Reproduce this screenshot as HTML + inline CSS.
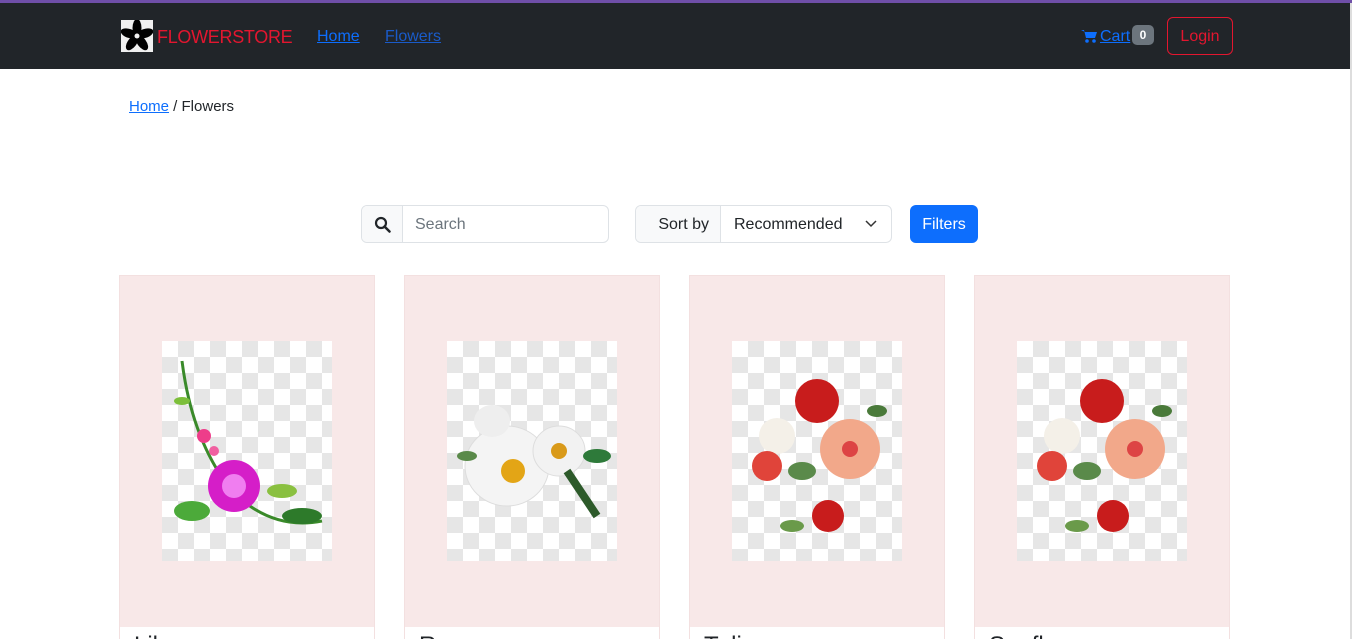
<!DOCTYPE html>
<html><head><style>
*{box-sizing:border-box;margin:0;padding:0}
html,body{width:1352px;height:639px;overflow:hidden}
body{background:#fff;font-family:"Liberation Sans",sans-serif;position:relative}
.top{position:absolute;left:0;top:0;width:1352px;height:3px;background:#6f4fa8}
.nav{position:absolute;left:0;top:3px;width:1350px;height:66px;background:#212529}
.logo{position:absolute;left:121px;top:20px;width:32px;height:32px;background:#f0f0f0}
.brand{position:absolute;left:157px;top:27px;color:#e3162f;font-size:18px;letter-spacing:-0.3px}
.nl{position:absolute;top:28px;font-size:16px;color:#0d6efd;text-decoration:underline}
.badge{position:absolute;left:1132px;top:25px;width:22px;height:20px;background:#6c757d;border-radius:5px;color:#fff;font-size:12px;font-weight:bold;text-align:center;line-height:20px}
.login{position:absolute;left:1167px;top:17px;width:66px;height:38px;border:1px solid #e3162f;border-radius:6px;color:#e3162f;font-size:16px;text-align:center;line-height:38px}
.sb{position:absolute;right:0;top:3px;width:2px;height:636px;background:#ddd}
.grp{position:absolute;top:205px;height:38px;border:1px solid #dee2e6;border-radius:6px;overflow:hidden;font-size:16px;color:#212529}
.grp div{position:absolute;top:0;height:36px;line-height:38px}
.card{position:absolute;top:275px;width:256px;height:364px;border:1px solid #f3e0e0;border-bottom:none;overflow:hidden}
.pink{position:absolute;left:0;top:0;width:254px;height:351px;background:#f8e8e8}
.img{position:absolute;left:42px;top:65px;width:170px;height:220px;background-color:#fff;background-image:linear-gradient(45deg,#e6e6e6 25%,transparent 25%,transparent 75%,#e6e6e6 75%),linear-gradient(45deg,#e6e6e6 25%,transparent 25%,transparent 75%,#e6e6e6 75%);background-size:32px 32px;background-position:0 0,16px 16px}
.t{position:absolute;left:14px;top:356px;font-size:24px;color:#212529}
</style></head><body>
<div class="top"></div>
<div class="nav"></div>
<div class="logo"><svg width="32" height="32" viewBox="0 0 32 32"><g fill="#000" transform="translate(16 16)"><ellipse rx="4.5" ry="9" cy="-8"/><ellipse rx="4.5" ry="9" cy="-8" transform="rotate(72)"/><ellipse rx="4.5" ry="9" cy="-8" transform="rotate(144)"/><ellipse rx="4.5" ry="9" cy="-8" transform="rotate(216)"/><ellipse rx="4.5" ry="9" cy="-8" transform="rotate(288)"/><circle r="2.5" fill="#f0f0f0"/></g></svg></div>
<div class="brand">FLOWERSTORE</div>
<div class="nl" style="left:317px">Home</div>
<div class="nl" style="left:385px;color:#1a5bc8">Flowers</div>
<svg style="position:absolute;left:1081px;top:29px" width="16" height="15" viewBox="0 0 16 15"><path d="M0 1h3l2 8h9l2-6H4" fill="#0d6efd"/><circle cx="6" cy="12" r="1.8" fill="#0d6efd"/><circle cx="13" cy="12" r="1.8" fill="#0d6efd"/></svg>
<div class="nl" style="left:1100px">Cart</div>
<div class="badge">0</div>
<div class="login">Login</div>
<div class="sb"></div>
<div style="position:absolute;left:129px;top:98px;font-size:15px;color:#212529"><span style="color:#0d6efd;text-decoration:underline">Home</span> / Flowers</div>
<div class="grp" style="left:361px;width:248px">
<div style="left:0;width:41px;background:#f8f9fa;border-right:1px solid #dee2e6"><svg style="position:absolute;left:12px;top:10px" width="17" height="17" viewBox="0 0 17 17"><circle cx="7" cy="7" r="5" stroke="#212529" stroke-width="2.2" fill="none"/><path d="M10.5 10.5l5 5" stroke="#212529" stroke-width="2.5" stroke-linecap="round"/></svg></div>
<div style="left:53px;color:#6c757d">Search</div></div>
<div class="grp" style="left:635px;width:257px">
<div style="left:0;width:85px;background:#f8f9fa;border-right:1px solid #dee2e6;text-align:right;padding-right:11px">Sort by</div>
<div style="left:98px">Recommended</div>
<svg style="position:absolute;left:229px;top:14px" width="12" height="8" viewBox="0 0 12 8"><path d="M1 1l5 5 5-5" stroke="#333" stroke-width="1.5" fill="none"/></svg></div>
<div style="position:absolute;left:910px;top:205px;width:68px;height:38px;background:#0d6efd;border-radius:6px;color:#fff;font-size:16px;text-align:center;line-height:39px">Filters</div>

<div class="card" style="left:119px"><div class="pink"><div class="img"><svg width="170" height="220"><path d="M20 20 Q30 100 70 150 Q110 190 160 180" stroke="#3a8a2a" stroke-width="3" fill="none"/><ellipse cx="30" cy="170" rx="18" ry="10" fill="#4caa3a"/><ellipse cx="140" cy="175" rx="20" ry="8" fill="#2d7a2a"/><ellipse cx="120" cy="150" rx="15" ry="7" fill="#8ac040"/><circle cx="72" cy="145" r="26" fill="#d51ec8"/><circle cx="72" cy="145" r="12" fill="#f07ef0"/><circle cx="42" cy="95" r="7" fill="#ee3d8a"/><circle cx="52" cy="110" r="5" fill="#f060a0"/><ellipse cx="20" cy="60" rx="8" ry="4" fill="#7cbf3a"/></svg></div></div><div class="t">Lily</div></div>
<div class="card" style="left:404px"><div class="pink"><div class="img"><svg width="170" height="220"><ellipse cx="60" cy="125" rx="42" ry="40" fill="#f4f4f4" stroke="#ddd"/><circle cx="66" cy="130" r="12" fill="#e3a516"/><ellipse cx="112" cy="110" rx="26" ry="25" fill="#f2f2f2" stroke="#ddd"/><circle cx="112" cy="110" r="8" fill="#d99a1a"/><ellipse cx="45" cy="80" rx="18" ry="16" fill="#eee"/><path d="M120 130 L150 175" stroke="#2d5a2a" stroke-width="8"/><ellipse cx="150" cy="115" rx="14" ry="7" fill="#2e7a3a"/><ellipse cx="20" cy="115" rx="10" ry="5" fill="#5a8a4a"/></svg></div></div><div class="t">Rose</div></div>
<div class="card" style="left:689px"><div class="pink"><div class="img"><svg width="170" height="220"><circle cx="85" cy="60" r="22" fill="#c81c1c"/><circle cx="118" cy="108" r="30" fill="#f2a88a"/><circle cx="118" cy="108" r="8" fill="#d44"/><circle cx="45" cy="95" r="18" fill="#f4f0e8"/><circle cx="35" cy="125" r="15" fill="#e0443a"/><circle cx="96" cy="175" r="16" fill="#c81c1c"/><ellipse cx="70" cy="130" rx="14" ry="9" fill="#5a8a4a"/><ellipse cx="60" cy="185" rx="12" ry="6" fill="#6a9a4a"/><ellipse cx="145" cy="70" rx="10" ry="6" fill="#4a7a3a"/></svg></div></div><div class="t">Tulip</div></div>
<div class="card" style="left:974px"><div class="pink"><div class="img"><svg width="170" height="220"><circle cx="85" cy="60" r="22" fill="#c81c1c"/><circle cx="118" cy="108" r="30" fill="#f2a88a"/><circle cx="118" cy="108" r="8" fill="#d44"/><circle cx="45" cy="95" r="18" fill="#f4f0e8"/><circle cx="35" cy="125" r="15" fill="#e0443a"/><circle cx="96" cy="175" r="16" fill="#c81c1c"/><ellipse cx="70" cy="130" rx="14" ry="9" fill="#5a8a4a"/><ellipse cx="60" cy="185" rx="12" ry="6" fill="#6a9a4a"/><ellipse cx="145" cy="70" rx="10" ry="6" fill="#4a7a3a"/></svg></div></div><div class="t">Sunflower</div></div>
</body></html>
